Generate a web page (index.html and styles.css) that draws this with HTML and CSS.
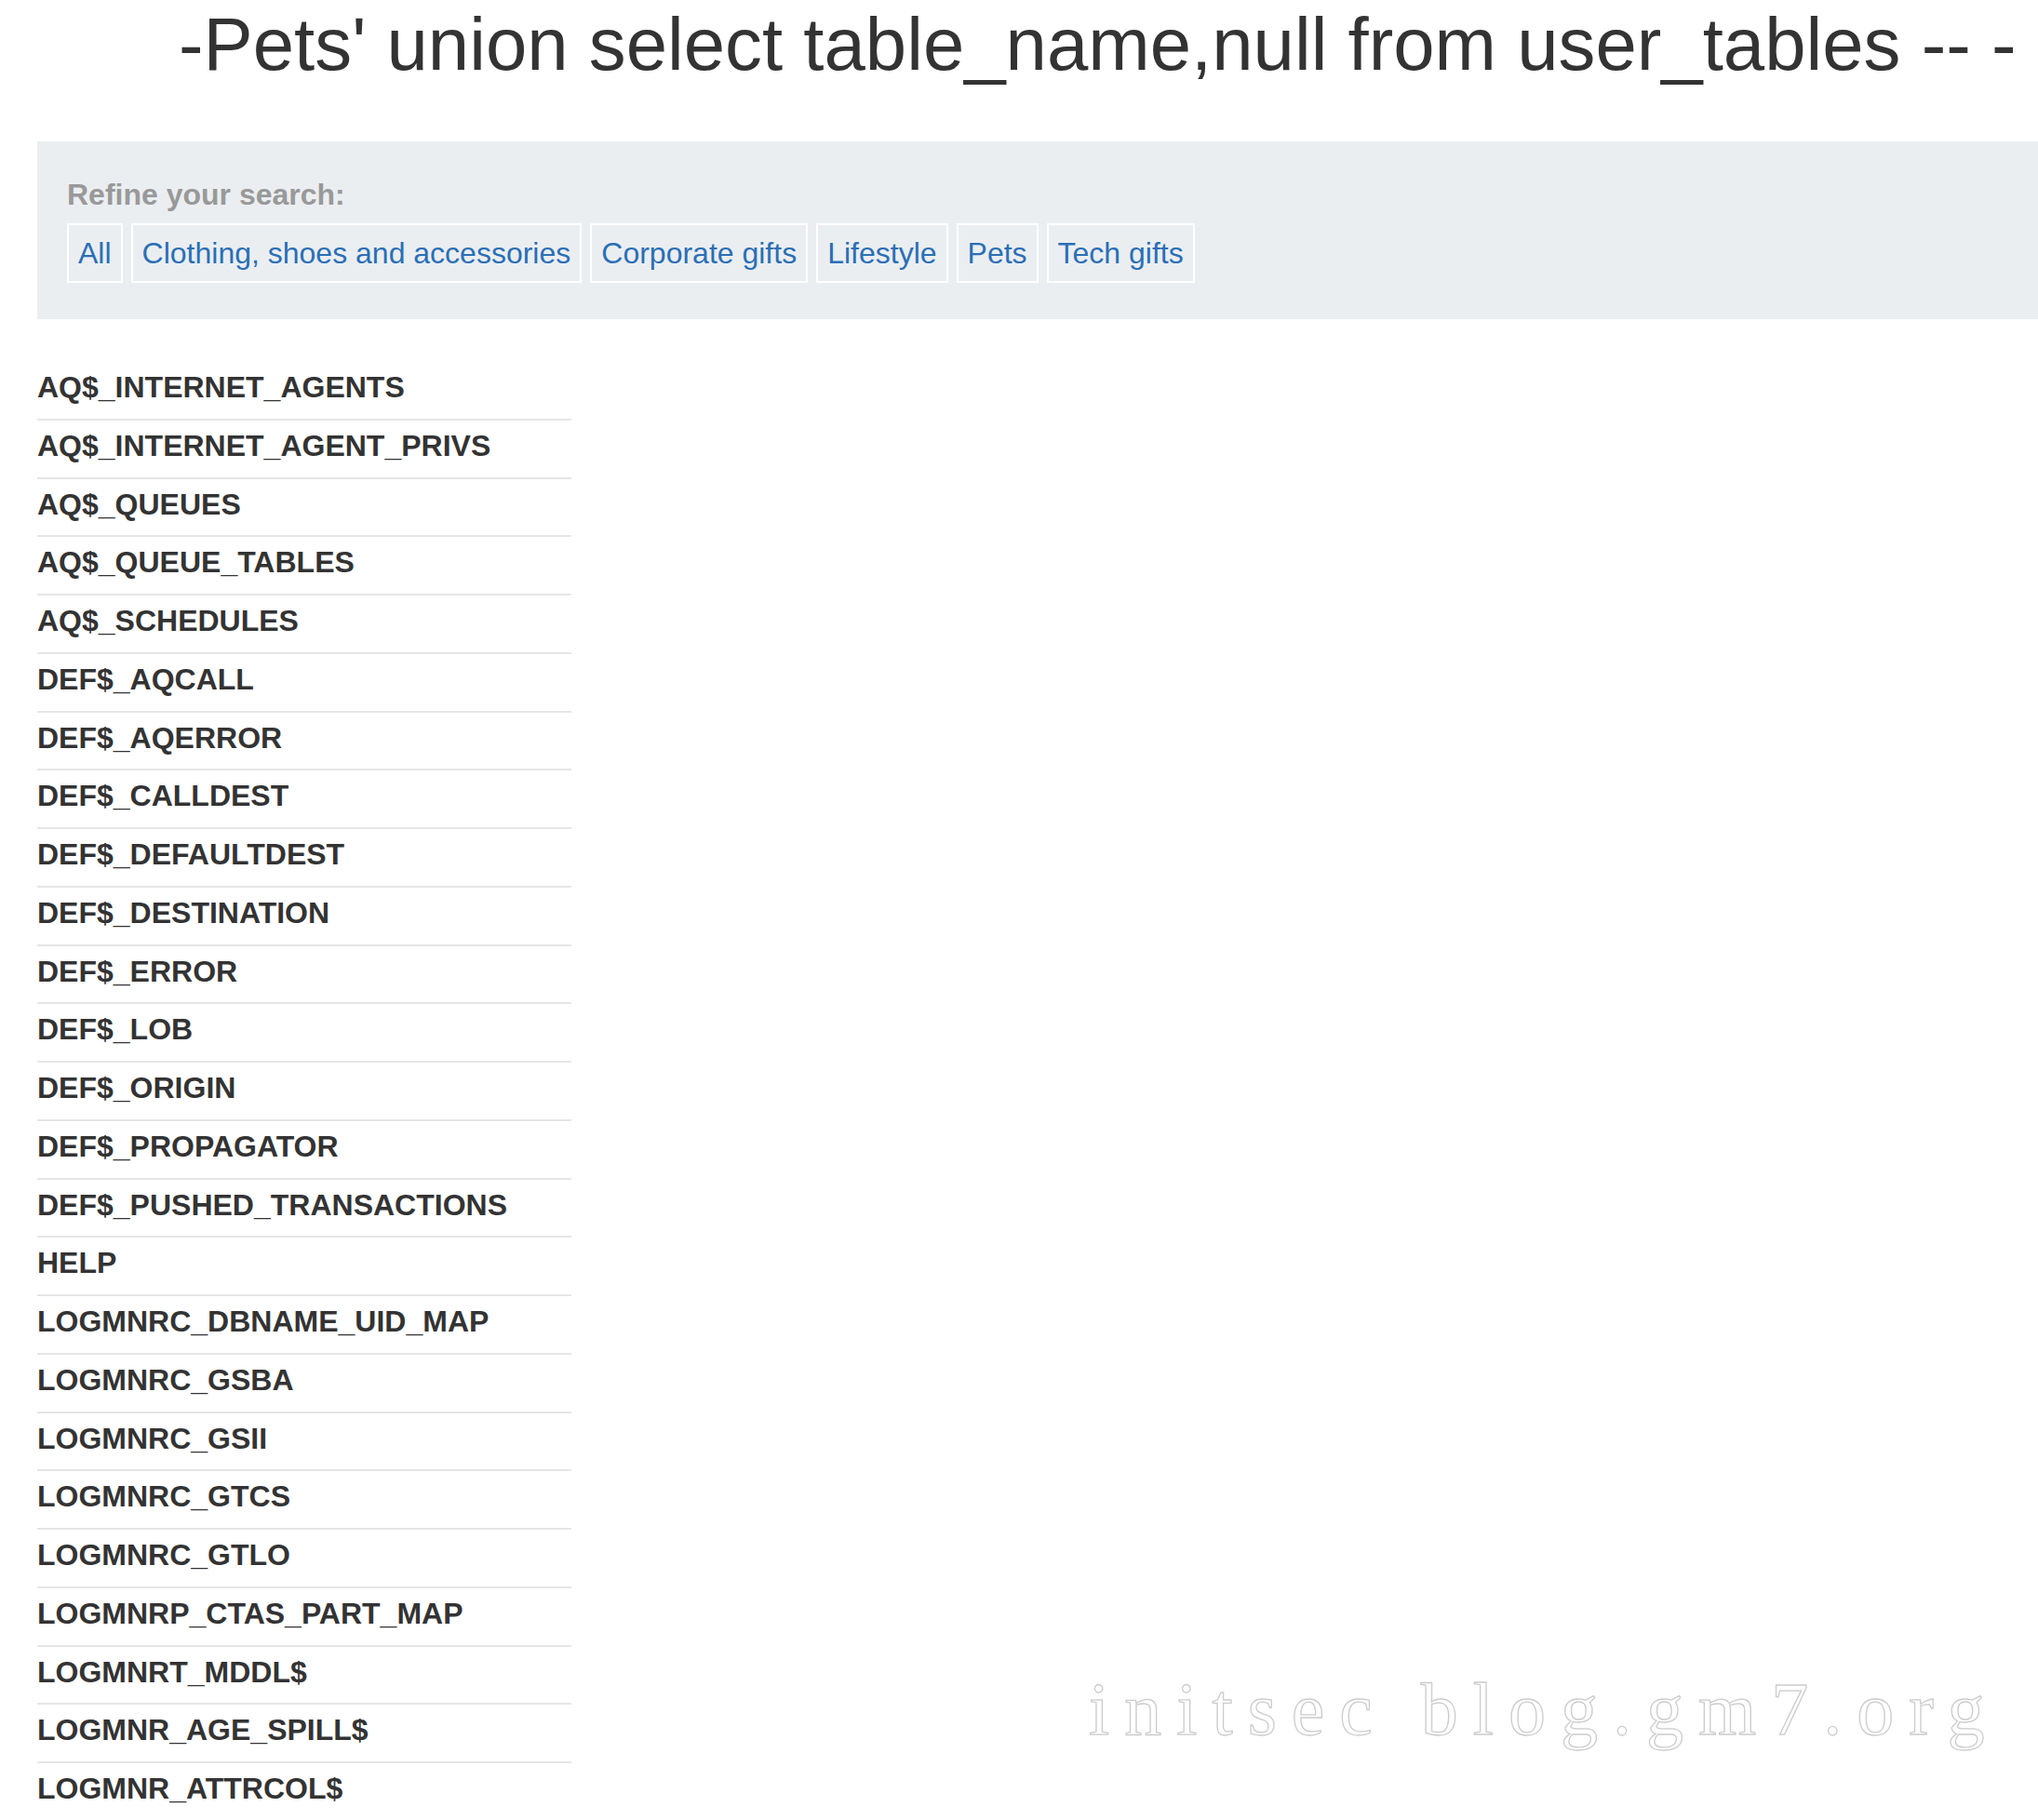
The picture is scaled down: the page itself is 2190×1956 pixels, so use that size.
FILE: index.html
```html
<!DOCTYPE html>
<html lang="en">
<head>
<meta charset="utf-8">
<title>-Pets' union select table_name,null from user_tables -- -</title>
<link rel="stylesheet" href="styles.css">
</head>
<body>
<div class="page">
  <h1 class="title">-Pets' union select table_name,null from user_tables -- -</h1>
  <section class="filters">
    <div class="filters-label">Refine your search:</div>
    <div class="filters-list">
      <a class="filter" href="#">All</a>
      <a class="filter" href="#">Clothing, shoes and accessories</a>
      <a class="filter" href="#">Corporate gifts</a>
      <a class="filter" href="#">Lifestyle</a>
      <a class="filter" href="#">Pets</a>
      <a class="filter" href="#">Tech gifts</a>
    </div>
  </section>
  <ul class="results">
    <li class="result">AQ$_INTERNET_AGENTS</li>
    <li class="result">AQ$_INTERNET_AGENT_PRIVS</li>
    <li class="result">AQ$_QUEUES</li>
    <li class="result">AQ$_QUEUE_TABLES</li>
    <li class="result">AQ$_SCHEDULES</li>
    <li class="result">DEF$_AQCALL</li>
    <li class="result">DEF$_AQERROR</li>
    <li class="result">DEF$_CALLDEST</li>
    <li class="result">DEF$_DEFAULTDEST</li>
    <li class="result">DEF$_DESTINATION</li>
    <li class="result">DEF$_ERROR</li>
    <li class="result">DEF$_LOB</li>
    <li class="result">DEF$_ORIGIN</li>
    <li class="result">DEF$_PROPAGATOR</li>
    <li class="result">DEF$_PUSHED_TRANSACTIONS</li>
    <li class="result">HELP</li>
    <li class="result">LOGMNRC_DBNAME_UID_MAP</li>
    <li class="result">LOGMNRC_GSBA</li>
    <li class="result">LOGMNRC_GSII</li>
    <li class="result">LOGMNRC_GTCS</li>
    <li class="result">LOGMNRC_GTLO</li>
    <li class="result">LOGMNRP_CTAS_PART_MAP</li>
    <li class="result">LOGMNRT_MDDL$</li>
    <li class="result">LOGMNR_AGE_SPILL$</li>
    <li class="result">LOGMNR_ATTRCOL$</li>
  </ul>
</div>
<div class="watermark">initsec blog.gm7.org</div>
</body>
</html>
```

FILE: styles.css
```css
html, body {
  margin: 0;
  padding: 0;
  background: #ffffff;
}

body {
  font-family: "Liberation Sans", Arial, Helvetica, sans-serif;
  color: #333333;
  position: relative;
  min-height: 1956px;
  overflow: hidden;
}

.page {
  padding-left: 40px;
}

.title {
  margin: 4px 0 0 0;
  padding-left: 152px;
  font-size: 79.75px;
  font-weight: normal;
  line-height: 88px;
  color: #333333;
  white-space: nowrap;
}

.filters {
  margin-top: 60px;
  background: #ebeef1;
  padding: 34px 32px 39px 32px;
}

.filters-label {
  font-size: 32px;
  font-weight: bold;
  line-height: 46px;
  color: #999999;
  margin-bottom: 8px;
}

.filters-list {
  display: flex;
  gap: 9px;
}

.filter {
  display: block;
  border: 2px solid #ffffff;
  padding: 7px 10px;
  font-size: 32px;
  line-height: 46px;
  color: #2a6fb6;
  text-decoration: none;
}

.results {
  list-style: none;
  margin: 46px 0 0 0;
  padding: 0;
  width: 574px;
}

.result {
  padding: 5px 0 10px 0;
  border-bottom: 2px solid #e6e6e6;
  font-size: 32px;
  font-weight: bold;
  line-height: 45.75px;
  color: #333333;
}

.watermark {
  position: absolute;
  left: 1170px;
  top: 1797px;
  font-family: "Liberation Serif", "Times New Roman", serif;
  font-size: 80px;
  line-height: 80px;
  letter-spacing: 16px;
  white-space: nowrap;
  color: transparent;
  -webkit-text-stroke: 1.3px #cccccc;
}
```
